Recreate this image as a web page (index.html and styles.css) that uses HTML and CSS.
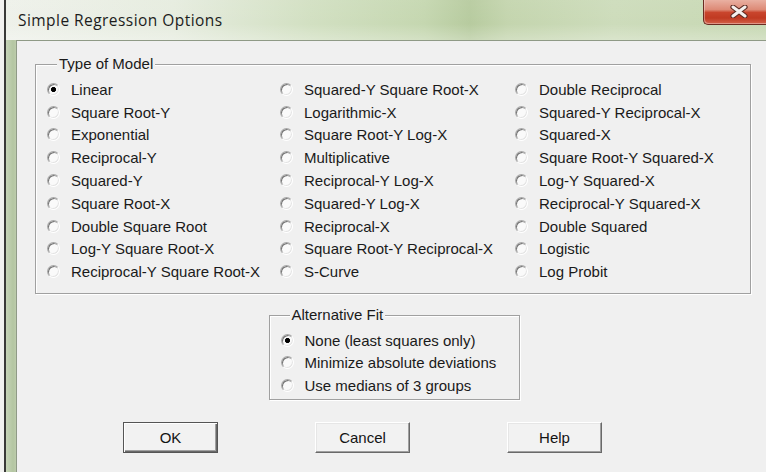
FILE: index.html
```html
<!DOCTYPE html>
<html lang="en">
<head>
<meta charset="utf-8">
<title>Simple Regression Options</title>
<link rel="stylesheet" href="styles.css">
</head>
<body>
<div class="window">
  <div class="titlebar">
    <span class="title">Simple Regression Options</span>
    <button class="close" type="button" aria-label="Close">
      <svg width="18" height="13" viewBox="0 0 18 13">
        <path d="M3 2 L15 11 M15 2 L3 11" stroke="#5a2a22" stroke-width="5.2" stroke-linecap="round" fill="none"/>
        <path d="M3 2 L15 11 M15 2 L3 11" stroke="#f4f0ee" stroke-width="3" stroke-linecap="round" fill="none"/>
      </svg>
    </button>
  </div>
  <div class="body">
    <div class="frame-left"></div>
    <form class="client">
      <fieldset class="group model">
        <legend>Type of Model</legend>
        <div class="options">
          <label class="option"><input class="radio" type="radio" name="model" checked><span>Linear</span></label>
          <label class="option"><input class="radio" type="radio" name="model"><span>Square Root-Y</span></label>
          <label class="option"><input class="radio" type="radio" name="model"><span>Exponential</span></label>
          <label class="option"><input class="radio" type="radio" name="model"><span>Reciprocal-Y</span></label>
          <label class="option"><input class="radio" type="radio" name="model"><span>Squared-Y</span></label>
          <label class="option"><input class="radio" type="radio" name="model"><span>Square Root-X</span></label>
          <label class="option"><input class="radio" type="radio" name="model"><span>Double Square Root</span></label>
          <label class="option"><input class="radio" type="radio" name="model"><span>Log-Y Square Root-X</span></label>
          <label class="option"><input class="radio" type="radio" name="model"><span>Reciprocal-Y Square Root-X</span></label>

          <label class="option"><input class="radio" type="radio" name="model"><span>Squared-Y Square Root-X</span></label>
          <label class="option"><input class="radio" type="radio" name="model"><span>Logarithmic-X</span></label>
          <label class="option"><input class="radio" type="radio" name="model"><span>Square Root-Y Log-X</span></label>
          <label class="option"><input class="radio" type="radio" name="model"><span>Multiplicative</span></label>
          <label class="option"><input class="radio" type="radio" name="model"><span>Reciprocal-Y Log-X</span></label>
          <label class="option"><input class="radio" type="radio" name="model"><span>Squared-Y Log-X</span></label>
          <label class="option"><input class="radio" type="radio" name="model"><span>Reciprocal-X</span></label>
          <label class="option"><input class="radio" type="radio" name="model"><span>Square Root-Y Reciprocal-X</span></label>
          <label class="option"><input class="radio" type="radio" name="model"><span>S-Curve</span></label>

          <label class="option"><input class="radio" type="radio" name="model"><span>Double Reciprocal</span></label>
          <label class="option"><input class="radio" type="radio" name="model"><span>Squared-Y Reciprocal-X</span></label>
          <label class="option"><input class="radio" type="radio" name="model"><span>Squared-X</span></label>
          <label class="option"><input class="radio" type="radio" name="model"><span>Square Root-Y Squared-X</span></label>
          <label class="option"><input class="radio" type="radio" name="model"><span>Log-Y Squared-X</span></label>
          <label class="option"><input class="radio" type="radio" name="model"><span>Reciprocal-Y Squared-X</span></label>
          <label class="option"><input class="radio" type="radio" name="model"><span>Double Squared</span></label>
          <label class="option"><input class="radio" type="radio" name="model"><span>Logistic</span></label>
          <label class="option"><input class="radio" type="radio" name="model"><span>Log Probit</span></label>
        </div>
      </fieldset>

      <fieldset class="group fit">
        <legend>Alternative Fit</legend>
        <label class="option"><input class="radio" type="radio" name="fit" checked><span>None (least squares only)</span></label>
        <label class="option"><input class="radio" type="radio" name="fit"><span>Minimize absolute deviations</span></label>
        <label class="option"><input class="radio" type="radio" name="fit"><span>Use medians of 3 groups</span></label>
      </fieldset>

      <div class="buttons">
        <button class="btn default" type="button">OK</button>
        <button class="btn" type="button">Cancel</button>
        <button class="btn" type="button">Help</button>
      </div>
    </form>
  </div>
</div>
</body>
</html>
```

FILE: styles.css
```css
html, body {
  margin: 0;
  padding: 0;
  background: #f2f2f0;
}

.window {
  width: 762px;
  height: 472px;
  margin-left: 4px;
  border-left: 2px solid #3a3a38;
  display: flex;
  flex-direction: column;
  overflow: hidden;
  box-sizing: border-box;
}

/* Aero-style glass caption */
.titlebar {
  height: 40px;
  flex: none;
  display: flex;
  align-items: flex-start;
  background:
    linear-gradient(to bottom, rgba(255,255,255,0.05), rgba(255,255,255,0) 60%, rgba(255,255,255,0.25)),
    linear-gradient(to right, #eef1ea 0%, #e6ecdf 22%, #d2e0c2 40%, #c5d7b0 55%, #b7cb9f 61%, #c4d5ae 66%, #cddcbb 80%, #c7d8b3 100%);
}

.title {
  font-family: "Open Sans", "Noto Sans", sans-serif;
  font-size: 15.5px;
  color: #1c1c1c;
  line-height: 40px;
  padding-left: 12px;
  letter-spacing: 0.45px;
}

.close {
  margin-left: auto;
  width: 63px;
  height: 25px;
  padding: 0 0 0 26px;
  border: 1px solid #6a2c22;
  border-top: none;
  border-right: none;
  border-bottom-left-radius: 5px;
  background: linear-gradient(to bottom, #e9b0a2 0%, #dd8a76 40%, #c9452d 52%, #c03a22 75%, #d3624a 100%);
  box-shadow: inset 1px -1px 0 rgba(255,255,255,0.35);
  display: flex;
  align-items: center;
  justify-content: flex-start;
}

.close svg {
  display: block;
  margin-top: -1px;
}

.body {
  flex: 1;
  display: flex;
  min-height: 0;
}

.frame-left {
  width: 10px;
  flex: none;
  background: linear-gradient(to right, #c6d4b7, #b4c6a2 70%, #bccbab);
}

.client {
  flex: 1;
  margin: 0;
  background: #f0f0f0;
  border-top: 1px solid #8f9a86;
  border-left: 1px solid #8f9a86;
  padding: 14px 15px 0 18px;
  display: flex;
  flex-direction: column;
  font-family: "Liberation Sans", Arial, sans-serif;
  font-size: 15px;
  color: #1a1a1a;
}

/* Etched group box */
.group {
  margin: 0;
  border: 1px solid #a0a0a0;
  box-shadow: 1px 1px 0 #ffffff, inset 1px 1px 0 #ffffff;
  min-inline-size: 0;
}

.group legend {
  line-height: 18px;
  padding: 0 2px;
  margin-left: 10px;
  background: #f0f0f0;
}

.model {
  padding: 5px 0 10px 11px;
}

.options {
  display: grid;
  grid-template-columns: 233px 235px 1fr;
  grid-template-rows: repeat(9, 22.8px);
  grid-auto-flow: column;
}

.option {
  display: flex;
  align-items: center;
  gap: 11px;
  height: 22.8px;
  white-space: nowrap;
}

.fit .option {
  height: 22.5px;
}

.fit {
  width: 251px;
  box-sizing: border-box;
  margin: 12px auto 0;
  padding: 5px 0 2px 11px;
  align-self: center;
  position: relative;
  left: 1px;
}

.fit legend {
  margin-left: 9px;
}

/* Classic 3D radio button */
.radio {
  appearance: none;
  -webkit-appearance: none;
  margin: 0;
  flex: none;
  width: 13px;
  height: 13px;
  border-radius: 50%;
  border: 1px solid;
  border-color: #a8a8a8 #ffffff #ffffff #a8a8a8;
  background: #fafafa;
  box-shadow: inset 1px 1px 0 #747474, inset -1px -1px 0 #e4e4e4;
  box-sizing: border-box;
}

.radio:checked {
  background: radial-gradient(circle, #000 0 2.2px, #fafafa 2.9px);
}

.buttons {
  display: flex;
  gap: 97px;
  padding-left: 88px;
  margin-top: 22px;
}

.btn {
  width: 95px;
  height: 31px;
  padding: 0;
  font-family: "Liberation Sans", Arial, sans-serif;
  font-size: 15px;
  color: #141414;
  background: #f2f2f2;
  border: 1px solid;
  border-color: #ffffff #696969 #696969 #ffffff;
  box-shadow: inset -1px -1px 0 #a0a0a0, inset 1px 1px 0 #e6e6e6;
}

.btn.default {
  border: 1px solid #555555;
  box-shadow: inset 1px 1px 0 #ffffff, inset -1px -1px 0 #696969, inset -2px -2px 0 #a0a0a0;
}
```
